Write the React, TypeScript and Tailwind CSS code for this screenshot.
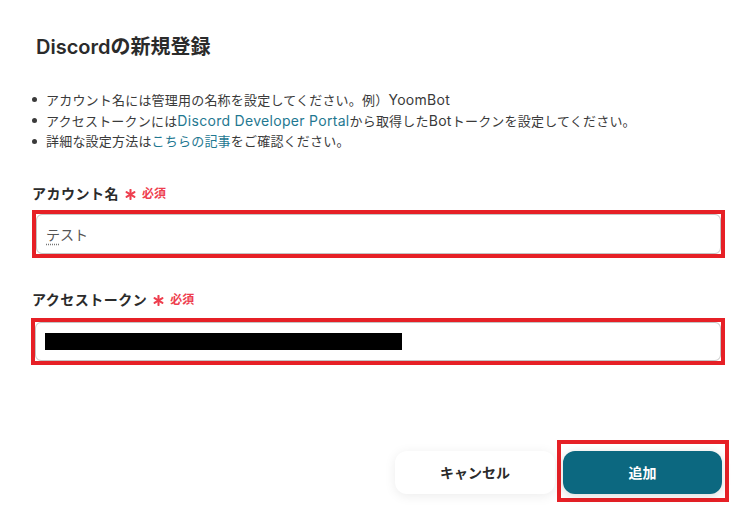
const font = { fontFamily: 'Inter, "Noto Sans CJK JP", "Noto Sans", sans-serif' }

function Asterisk() {
  return (
    <svg width="11" height="11" viewBox="0 0 10 10" className="shrink-0">
      <g stroke="#ee3e4e" strokeWidth="1.9" strokeLinecap="round">
        <line x1="5" y1="0.8" x2="5" y2="9.2" />
        <line x1="1.4" y1="2.9" x2="8.6" y2="7.1" />
        <line x1="1.4" y1="7.1" x2="8.6" y2="2.9" />
      </g>
    </svg>
  )
}

function FieldLabel({ text }: { text: string }) {
  return (
    <div className="flex items-center h-5 text-[14px] leading-5 font-bold text-[#2b2b2b]">
      <span className="tracking-[0.5px]">{text}</span>
      <span className="ml-[6px] mt-[1px]">
        <Asterisk />
      </span>
      <span className="ml-[6px] text-[12px] font-semibold text-[#ee3e4e]">必須</span>
    </div>
  )
}

function Bullet({ children }: { children: React.ReactNode }) {
  return (
    <li className="flex items-center h-[21px]">
      <span className="w-[5px] h-[5px] rounded-full bg-[#3a3a3a] shrink-0" />
      <span className="ml-[9px]">{children}</span>
    </li>
  )
}

function Latin({ children, link }: { children: React.ReactNode; link?: boolean }) {
  return (
    <span className={link ? 'text-[14px] tracking-[0.3px] text-[#1f7891]' : 'text-[14px] tracking-[0.3px]'}>
      {children}
    </span>
  )
}

export default function App() {
  return (
    <div className="w-[752px] h-[525px] bg-white overflow-hidden" style={font}>
      <div className="pl-8 pr-[27px] pt-[33px]">
        <h1 className="pl-1 text-[20px] leading-7 font-semibold text-[#2b2b2b]">
          Discordの新規登録
        </h1>

        <ul className="mt-[28px] text-[13px] tracking-[0.2px] text-[#3a3a3a]">
          <Bullet>
            アカウント名には管理用の名称を設定してください。例）<Latin>YoomBot</Latin>
          </Bullet>
          <Bullet>
            アクセストークンには
            <Latin link>Discord Developer Portal</Latin>
            から取得した<Latin>Bot</Latin>トークンを設定してください。
          </Bullet>
          <Bullet>
            詳細な設定方法は<span className="text-[#1f7891]">こちらの記事</span>をご確認ください。
          </Bullet>
        </ul>

        <div className="mt-[32px]">
          <FieldLabel text="アカウント名" />
          <div className="mt-[6px] border-4 border-[#e62026]">
            <div className="h-10 rounded-md border border-[#c4c4c4] flex items-center pl-[9px] text-[14px] text-[#555]">
              <span className="underline decoration-dotted decoration-[#777] underline-offset-4">テ</span>
              <span>スト</span>
            </div>
          </div>
        </div>

        <div className="mt-[32px]">
          <FieldLabel text="アクセストークン" />
          <div className="mt-[8px] -ml-px border-4 border-[#e62026]">
            <div className="h-[39px] rounded-md border border-[#c4c4c4] flex items-center pl-[9px]">
              <div className="w-[357px] h-[17px] bg-black" />
            </div>
          </div>
        </div>
      </div>

      <div className="mt-[75px] flex justify-end items-start pr-[23px]">
        <button className="mt-[11px] w-[160px] h-[43px] rounded-xl bg-white shadow-[0_2px_12px_rgba(0,0,0,0.08)] text-[14px] font-bold text-[#2b2b2b]">
          キャンセル
        </button>
        <div className="ml-[2px] border-4 border-[#e62026] pt-[7px] pb-[4px] pl-[2px] pr-[3px]">
          <button className="w-[159px] h-[43px] rounded-xl bg-[#0c6880] shadow-[0_2px_10px_rgba(0,0,0,0.15)] text-[14px] font-bold text-white">
            追加
          </button>
        </div>
      </div>
    </div>
  )
}
